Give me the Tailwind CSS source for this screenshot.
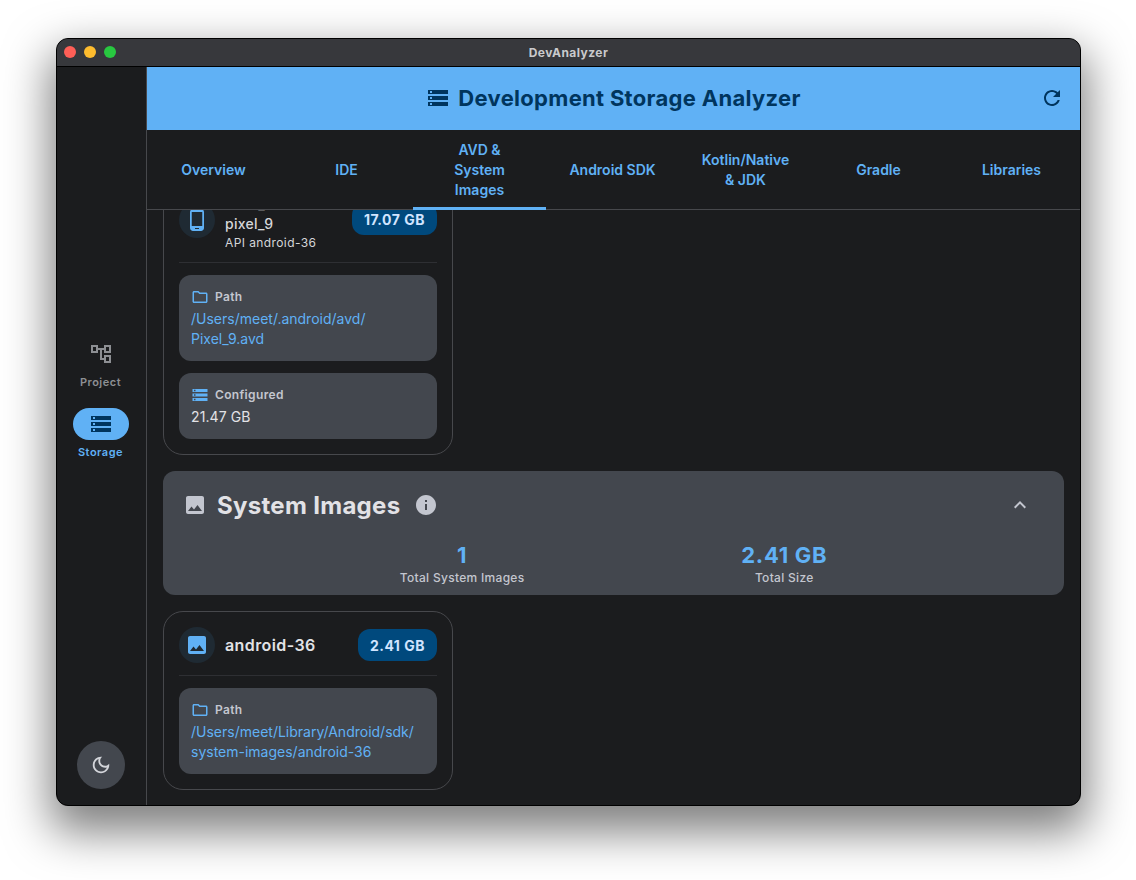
<!DOCTYPE html>
<html lang="en">
<head>
    <meta charset="UTF-8">
    <title>DevAnalyzer</title>
    <script src="https://cdn.jsdelivr.net/npm/@tailwindcss/browser@4"></script>
</head>
<body class="bg-white overflow-hidden" style='font-family: Inter, "Noto Sans", sans-serif;'>
<div class="h-[880px] pt-[38px] pl-[56px]">
    <!-- Window -->
    <div class="w-[1025px] h-[768px] flex flex-col rounded-[12px] overflow-hidden bg-[#1b1c1e] border border-black shadow-[0_20px_45px_6px_rgba(0,0,0,0.5)]">
        <div class="relative h-[28px] shrink-0 flex items-center justify-center bg-[#37383c] border-b border-black">
            <div class="absolute left-[7px] top-[7px] flex gap-[8px]">
                <span class="size-3 rounded-full bg-[#ff5f57]"></span>
                <span class="size-3 rounded-full bg-[#febc2e]"></span>
                <span class="size-3 rounded-full bg-[#28c840]"></span>
            </div>
            <span class="text-[12px] font-bold tracking-[0.45px] text-[#c9cacc]">DevAnalyzer</span>
        </div>

        <div class="flex flex-1 min-h-0">
            <!-- Nav rail -->
            <aside class="w-[90px] shrink-0 flex flex-col items-center pr-[2px] border-r border-[#47484c]">
                <div class="flex-1 flex flex-col items-center justify-center gap-[18px] pb-[10px]">
                    <div class="flex flex-col items-center gap-[4px]">
                        <div class="w-[56px] h-[32px] flex items-center justify-center">
                            <svg class="size-6 text-[#8d8f93]" viewBox="0 0 24 24" fill="currentColor"><path d="M22 11V3h-7v3H9V3H2v8h7V8h2v10h4v3h7v-8h-7v3h-2V8h2v3h7zM7 9H4V5h3v4zm10 6h3v4h-3v-4zm0-10h3v4h-3V5z"/></svg>
                        </div>
                        <span class="text-[11px] leading-[16px] font-semibold tracking-[0.5px] text-[#8d8f93]">Project</span>
                    </div>
                    <div class="flex flex-col items-center gap-[4px]">
                        <div class="w-[56px] h-[32px] rounded-full bg-[#60b1f5] flex items-center justify-center">
                            <svg class="size-6 text-[#00355e]" viewBox="0 0 24 24" fill="currentColor"><path d="M2 20h20v-4H2v4zm2-3h2v2H4v-2zM2 4v4h20V4H2zm4 3H4V5h2v2zm-4 7h20v-4H2v4zm2-3h2v2H4v-2z"/></svg>
                        </div>
                        <span class="text-[11px] leading-[16px] font-semibold tracking-[0.5px] text-[#60b1f5]">Storage</span>
                    </div>
                </div>
                <button class="size-12 mb-[16px] rounded-full bg-[#43474e] flex items-center justify-center">
                    <svg class="size-[22px] text-[#d3d5da]" viewBox="0 0 24 24" fill="currentColor"><path d="M9.37 5.51c-.18.64-.27 1.31-.27 1.99 0 4.08 3.32 7.4 7.4 7.4.68 0 1.35-.09 1.99-.27C17.45 17.19 14.93 19 12 19c-3.86 0-7-3.14-7-7 0-2.93 1.81-5.45 4.37-6.49zM12 3c-4.97 0-9 4.03-9 9s4.03 9 9 9 9-4.03 9-9c0-.46-.04-.92-.1-1.36-.98 1.37-2.58 2.26-4.4 2.26-2.98 0-5.4-2.42-5.4-5.4 0-1.81.89-3.42 2.26-4.4-.44-.06-.9-.1-1.36-.1z"/></svg>
                </button>
            </aside>

            <main class="flex-1 min-w-0 flex flex-col">
                <header class="relative h-[63px] shrink-0 bg-[#60b1f5] flex items-center justify-center gap-[8px] pb-[2px] text-[#00355e]">
                    <svg class="size-6" viewBox="0 0 24 24" fill="currentColor"><path d="M2 20h20v-4H2v4zm2-3h2v2H4v-2zM2 4v4h20V4H2zm4 3H4V5h2v2zm-4 7h20v-4H2v4zm2-3h2v2H4v-2z"/></svg>
                    <h1 class="text-[22px] leading-[28px] font-bold tracking-[0.3px]">Development Storage Analyzer</h1>
                    <svg class="absolute right-[16px] top-[19px] size-6" viewBox="0 0 24 24" fill="currentColor"><path d="M17.65 6.35C16.2 4.9 14.21 4 12 4c-4.42 0-7.99 3.58-7.99 8s3.57 8 7.99 8c3.73 0 6.84-2.55 7.73-6h-2.08c-.82 2.33-3.04 4-5.65 4-3.31 0-6-2.69-6-6s2.69-6 6-6c1.66 0 3.14.69 4.22 1.78L13 11h7V4l-2.35 2.35z"/></svg>
                </header>

                <nav class="h-[80px] shrink-0 grid grid-cols-7 pr-[2px] border-b border-[#47484c] text-[14px] leading-[20px] font-semibold text-[#60b1f5] text-center relative z-10 bg-[#1b1c1e]">
                    <div class="flex items-center justify-center">Overview</div>
                    <div class="flex items-center justify-center">IDE</div>
                    <div class="relative flex items-center justify-center">AVD &amp;<br>System<br>Images<span class="absolute left-0 right-0 bottom-[-1px] h-[3px] bg-[#60b1f5]"></span></div>
                    <div class="flex items-center justify-center">Android SDK</div>
                    <div class="flex items-center justify-center">Kotlin/Native<br>&amp; JDK</div>
                    <div class="flex items-center justify-center">Gradle</div>
                    <div class="flex items-center justify-center">Libraries</div>
                </nav>

                <div class="flex-1 min-h-0 overflow-hidden px-4">
                    <!-- scrolled list, first card is cut by the tab bar -->
                    <div class="flex flex-col gap-4 mt-[-32px]">
                        <section class="w-[290px] rounded-[20px] border border-[#47484c] p-[15px]">
                            <div class="flex items-center gap-[10px] pb-[10px] border-b border-[#2e2f33]">
                                <div class="size-9 shrink-0 rounded-full bg-[#1f2a33] flex items-center justify-center -mt-[6px]">
                                    <svg class="size-6 text-[#60b1f5]" viewBox="0 0 24 24" fill="currentColor"><path d="M16 1H8C6.34 1 5 2.34 5 4v16c0 1.66 1.34 3 3 3h8c1.66 0 3-1.34 3-3V4c0-1.66-1.34-3-3-3zm-2 20h-4v-1h4v1zm3.25-3H6.75V4h10.5v14z"/></svg>
                                </div>
                                <div class="flex-1 min-w-0">
                                    <div class="text-[14px] leading-[20px] font-medium tracking-[0.3px] text-[#d5d6d9]">Pixel_<br>pixel_9</div>
                                    <div class="text-[12px] leading-[18px] tracking-[0.4px] text-[#d5d6d9]">API android-36</div>
                                </div>
                                <span class="shrink-0 h-[32px] px-3 rounded-[12px] bg-[#00497d] text-[#d1e4ff] text-[14px] font-bold tracking-[0.5px] flex items-center -mt-[8px]">17.07 GB</span>
                            </div>
                            <div class="mt-[12px] flex flex-col gap-[12px]">
                                <div class="rounded-[12px] bg-[#43474e] px-3 py-[12px]">
                                    <div class="flex items-center gap-[6px] text-[12px] leading-[20px] font-semibold tracking-[0.35px] text-[#c3c6cf]">
                                        <svg class="size-[18px] text-[#60b1f5]" viewBox="0 0 24 24" fill="currentColor"><path d="M9.17 6l2 2H20v10H4V6h5.17M10 4H4c-1.1 0-1.99.9-1.99 2L2 18c0 1.1.9 2 2 2h16c1.1 0 2-.9 2-2V8c0-1.1-.9-2-2-2h-8l-2-2z"/></svg>
                                        Path
                                    </div>
                                    <div class="mt-[2px] text-[14px] leading-[20px] text-[#60b1f5]">/Users/meet/.android/avd/<br>Pixel_9.avd</div>
                                </div>
                                <div class="rounded-[12px] bg-[#43474e] px-3 py-[12px]">
                                    <div class="flex items-center gap-[6px] text-[12px] leading-[20px] font-semibold tracking-[0.35px] text-[#c3c6cf]">
                                        <svg class="size-[18px] text-[#60b1f5]" viewBox="0 0 24 24" fill="currentColor"><path d="M2 20h20v-4H2v4zm2-3h2v2H4v-2zM2 4v4h20V4H2zm4 3H4V5h2v2zm-4 7h20v-4H2v4zm2-3h2v2H4v-2z"/></svg>
                                        Configured
                                    </div>
                                    <div class="mt-[2px] text-[14px] leading-[20px] tracking-[0.1px] text-[#e2e2e6]">21.47 GB</div>
                                </div>
                            </div>
                        </section>

                        <section class="rounded-[12px] bg-[#43474e] h-[124px] px-5 pt-[16px]">
                            <div class="flex items-center h-[36px]">
                                <svg class="size-6 text-[#c3c6cf]" viewBox="0 0 24 24" fill="currentColor"><path d="M21 19V5c0-1.1-.9-2-2-2H5c-1.1 0-2 .9-2 2v14c0 1.1.9 2 2 2h14c1.1 0 2-.9 2-2zM8.5 13.5l2.5 3.01L14.5 12l4.5 6H5l3.5-4.5z"/></svg>
                                <h2 class="ml-[10px] mt-[2px] text-[24px] leading-[32px] font-bold tracking-[0.3px] text-[#e2e2e6]">System Images</h2>
                                <svg class="size-6 ml-[14px] text-[#c3c6cf]" viewBox="0 0 24 24" fill="currentColor"><path d="M12 2C6.48 2 2 6.48 2 12s4.48 10 10 10 10-4.48 10-10S17.52 2 12 2zm1 15h-2v-6h2v6zm0-8h-2V7h2v2z"/></svg>
                                <svg class="size-6 ml-auto mr-[12px] text-[#c3c6cf]" viewBox="0 0 24 24" fill="currentColor"><path d="M7.41 15.41 12 10.83l4.59 4.58L18 14l-6-6-6 6z"/></svg>
                            </div>
                            <div class="mt-[18px] flex justify-evenly text-center">
                                <div>
                                    <div class="text-[22px] leading-[28px] font-bold tracking-[0.7px] text-[#60b1f5]">1</div>
                                    <div class="mt-[1px] text-[12px] leading-[16px] font-medium tracking-[0.3px] text-[#c3c6cf]">Total System Images</div>
                                </div>
                                <div>
                                    <div class="text-[22px] leading-[28px] font-bold tracking-[0.7px] text-[#60b1f5]">2.41 GB</div>
                                    <div class="mt-[1px] text-[12px] leading-[16px] font-medium tracking-[0.3px] text-[#c3c6cf]">Total Size</div>
                                </div>
                            </div>
                        </section>

                        <section class="w-[290px] rounded-[20px] border border-[#47484c] p-[15px]">
                            <div class="flex items-center gap-[10px] pb-[12px] border-b border-[#2e2f33]">
                                <div class="size-9 shrink-0 rounded-full bg-[#1f2a33] flex items-center justify-center">
                                    <svg class="size-6 text-[#60b1f5]" viewBox="0 0 24 24" fill="currentColor"><path d="M21 19V5c0-1.1-.9-2-2-2H5c-1.1 0-2 .9-2 2v14c0 1.1.9 2 2 2h14c1.1 0 2-.9 2-2zM8.5 13.5l2.5 3.01L14.5 12l4.5 6H5l3.5-4.5z"/></svg>
                                </div>
                                <div class="flex-1 min-w-0 text-[16px] leading-[24px] font-semibold tracking-[0.4px] text-[#e2e2e6]">android-36</div>
                                <span class="shrink-0 h-[32px] px-3 rounded-[12px] bg-[#00497d] text-[#d1e4ff] text-[14px] font-bold tracking-[0.5px] flex items-center">2.41 GB</span>
                            </div>
                            <div class="mt-[12px] rounded-[12px] bg-[#43474e] px-3 py-[12px]">
                                <div class="flex items-center gap-[6px] text-[12px] leading-[20px] font-semibold tracking-[0.35px] text-[#c3c6cf]">
                                    <svg class="size-[18px] text-[#60b1f5]" viewBox="0 0 24 24" fill="currentColor"><path d="M9.17 6l2 2H20v10H4V6h5.17M10 4H4c-1.1 0-1.99.9-1.99 2L2 18c0 1.1.9 2 2 2h16c1.1 0 2-.9 2-2V8c0-1.1-.9-2-2-2h-8l-2-2z"/></svg>
                                    Path
                                </div>
                                <div class="mt-[2px] text-[14px] leading-[20px] text-[#60b1f5]">/Users/meet/Library/Android/sdk/<br>system-images/android-36</div>
                            </div>
                        </section>
                    </div>
                </div>
            </main>
        </div>
    </div>
</div>
</body>
</html>
